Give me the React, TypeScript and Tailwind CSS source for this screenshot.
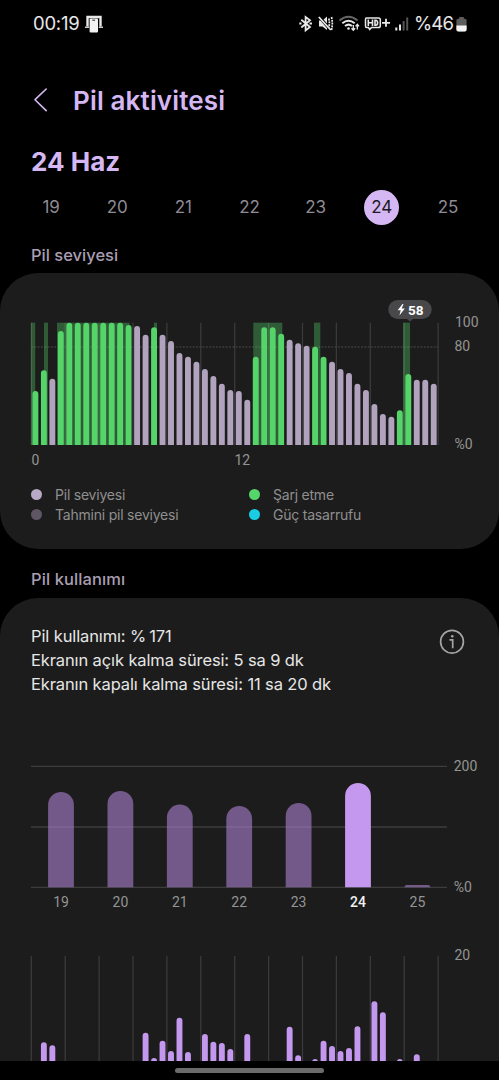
import type { ReactNode } from "react";

type Level = { v: number; charging?: boolean };

const c = (v: number): Level => ({ v, charging: true });
const n = (v: number): Level => ({ v });

const levels: Level[] = [
  c(54), c(74.7), n(66.3), c(114), c(122.3), c(122.3), c(122.3), c(122.3),
  c(122.3), c(122.3), c(122.3), c(120), n(119), n(110.3), c(117.7), n(110.3),
  n(104), n(92), n(88.3), n(83.3), n(76), n(69), n(61.3), n(55),
  n(54), n(45.3), c(88.3), c(117.7), c(117.7), c(111.3), n(105.3), n(101.7),
  n(99.3), c(98.3), c(88.3), n(83.3), n(76), n(72), n(61.3), n(55),
  n(41), n(31), n(28.3), c(34.7), c(71), n(65.3), n(65.3), n(61.3),
];

const chargeSpans: [number, number][] = [
  [31, 4.2], [44, 4], [57, 72.5], [154, 3], [253.3, 29], [314, 6.3], [403, 7],
];

const daily: [string, number][] = [
  ["19", 95.3], ["20", 96.3], ["21", 82.7], ["22", 81.3], ["23", 84.3], ["24", 104.3], ["25", 2.3],
];

const hourly: [number, number][] = [
  [1, 18.7], [2, 15.7], [13, 28.3], [14, 3], [15, 20.3], [16, 10], [17, 43.3], [18, 9],
  [20, 27], [21, 19.3], [22, 18], [23, 12], [25, 27], [30, 34.3], [31, 5.7], [33, 2],
  [34, 20.3], [35, 15], [36, 10], [37, 13], [38, 34.7], [40, 59.7], [41, 48.7], [43, 2], [45, 6.7],
];

const gridX = Array.from({ length: 13 }, (_, i) => 31.3 + i * 33.9);
const slotX = (i: number) => 35.4 + i * 8.475;

function barPath(cx: number, width: number, height: number, base: number) {
  const r = Math.min(width / 2, height);
  const l = cx - width / 2;
  const t = base - height;
  return `M${l} ${base}V${t + r}A${r} ${r} 0 0 1 ${l + r} ${t}H${l + width - r}A${r} ${r} 0 0 1 ${l + width} ${t + r}V${base}Z`;
}

function StatusBar() {
  return (
    <div className="flex h-[46px] shrink-0 items-center justify-between pl-[33px] pr-[32px] pt-px text-[#e8e8e8]">
      <div className="flex items-center">
        <span className="w-[52px] whitespace-nowrap text-[18.5px] tracking-[-0.25px]">00:19</span>
        <svg className="h-[18px] w-[18px]" viewBox="0 0 18 18" fill="none">
          <path d="M2.500 11.500V2h13v9.500" stroke="#e8e8e8" strokeWidth="2.400" />
          <path d="M0 12.300h4.200M13.800 12.300H18" stroke="#cfcfcf" strokeWidth="1.400" />
          <rect x="4.600" y="3.600" width="8.400" height="14" rx="1" fill="#f2f2f2" />
          <path d="M7.300 5.200h2.800" stroke="#222" />
        </svg>
      </div>
      <div className="flex items-center">
        <svg className="h-[20px] w-[112px]" viewBox="298 14 112 20" fill="none" stroke="#e8e8e8" strokeWidth="1.8">
          <path d="m301.300 19.800 8.700 7.200-4.400 3.500V17l4.400 3.300-8.700 7.200" />
          <path d="M299.300 23.600h2.200M309.500 23.600h2.500" strokeWidth="2" />
          <path d="M319 20.500h3.500l4.500-4V30l-4.500-3.500H319Z" fill="#e8e8e8" stroke="none" />
          <path d="m319.500 17 11 13" stroke="#000" strokeWidth="3" />
          <path d="m318.800 17 12 13" strokeWidth="1.800" />
          <path d="M328.800 18.500q1.200 5 0 9M331.500 17q1.600 6.500 0 13" strokeDasharray="2 .8" strokeWidth="1.700" />
          <path d="M339.500 20.500q9-7.500 18 0" stroke="#666" strokeWidth="2" />
          <path d="M342.300 23.300q6.200-5 12.400 0M345 26q3.500-2.800 7 0" strokeWidth="2" />
          <circle cx="348.500" cy="28.500" r="1.300" fill="#e8e8e8" stroke="none" />
          <path d="M353.300 25v5m-1.800-1.800 1.800 2 1.800-2M357.300 29.500v-5m-1.700 1.800 1.700-2 1.700 2" strokeWidth="1.300" />
          <path d="M366.500 18h12q1.800 0 1.800 1.800v5.900q0 1.800-1.800 1.800h-7l-1.800 2-1.200-2h-2q-1 0-1-1.500V19.500q0-1.500 1-1.500Z" strokeWidth="1.500" />
          <path d="M368.300 19.500v6.500m4.200-6.500v6.500m-4.200-3.200h4.200M375 20.300v4.900h.7q1.900 0 1.900-2.400t-1.900-2.500Z" strokeWidth="1.600" />
          <path d="M382 22.800h8m-4-4v8" strokeWidth="1.800" />
          <path d="M396.300 27.500v3M400 24.500v6" strokeWidth="2" />
          <path d="M403.600 21v9.500M407.200 17.500v13" stroke="#555" strokeWidth="2" />
        </svg>
        <span className="ml-[4px] w-[42px] whitespace-nowrap text-[18.5px] tracking-[-0.8px]">%46</span>
        <svg className="mt-px h-[15px] w-[11px]" viewBox="0 0 11 15">
          <path d="M3.200 0h4.600v1.800H9q1.600 0 1.600 1.700V12.500q0 2-2 2H2.400q-2 0-2-2V3.500q0-1.700 1.600-1.700h1.200Z" fill="#5c5c5c" />
          <path d="M.4 8.500h10.200v4q0 2-2 2H2.400q-2 0-2-2Z" fill="#f4f4f4" />
        </svg>
      </div>
    </div>
  );
}

function Days() {
  return (
    <div className="mt-[11px] flex h-[36px] items-center px-[18px] text-[17px] tracking-[-0.1px] text-[#8f8b94]">
      {["19", "20", "21", "22", "23", "24", "25"].map((d) => (
        <div key={d} className="flex flex-1 justify-center">
          <span className={d === "24" ? "flex size-[35px] items-center justify-center rounded-full bg-[#d5b8f3] pt-px text-[#1d1822]" : "flex size-[35px] items-center justify-center pt-px"}>{d}</span>
        </div>
      ))}
    </div>
  );
}

function LevelChart() {
  return (
    <svg className="block h-[200px] w-[499px]" viewBox="0 273 499 200" fontFamily="Roboto, sans-serif">
      {gridX.map((x) => <path key={x} d={`M${x} 322.700V445`} stroke="#3a3a3a" strokeWidth="1.300" />)}
      <path d="M31 347h407" stroke="#4a4a4a" strokeDasharray="2 1.300" />
      {chargeSpans.map(([x, w]) => <rect key={x} x={x} y="322.700" width={w} height="122.300" fill="#55d66b" fillOpacity=".34" />)}
      {levels.map((b, i) => <path key={i} d={barPath(slotX(i), 5.9, b.v, 445)} fill={b.charging ? "#55d46a" : "#b1a3bd"} />)}
      <rect x="388.300" y="300" width="43.400" height="19" rx="9.500" fill="#48484a" />
      <path d="M406.500 318.500h7l-3.500 3Z" fill="#48484a" />
      <path d="m402.500 304-4.800 6.200h3l-1.300 5.300 5.400-7h-3.100l1.800-4.500Z" fill="#fff" />
      <text x="408" y="314.500" fill="#fff" fontSize="13.500" fontWeight="700" fontFamily="Roboto, sans-serif" textLength="15.500">58</text>
      <g fill="#949494" fontSize="14">
        <text x="455" y="327">100</text>
        <text x="454.500" y="351.300">80</text>
        <text x="454.500" y="449">%0</text>
        <text x="31.500" y="465.300">0</text>
        <text x="234.500" y="465.300">12</text>
      </g>
    </svg>
  );
}

function LegendItem({ dot, children }: { dot: string; children: ReactNode }) {
  return (
    <div className="flex h-[20px] items-center gap-[13px]">
      <span className={`size-[11px] rounded-full ${dot}`} />
      <span className="text-[14px] tracking-[-0.22px] text-[#8f8f8f]">{children}</span>
    </div>
  );
}

function DailyChart() {
  return (
    <svg className="block h-[170px] w-[499px]" viewBox="0 750 499 170" fontFamily="Roboto, sans-serif">
      <path d="M31 766.300h416M31 827h416M31 887.300h416" stroke="#3c3c3c" strokeWidth="1.300" />
      {daily.map(([d, h], i) => {
        const active = d === "24";
        const x = 61 + i * 59.4;
        return (
          <g key={d}>
            <path d={barPath(x, 25.8, h, 887.3)} fill={active ? "#c398ee" : "#a880cf"} fillOpacity={active ? 1 : 0.62} />
            <text x={x} y="907" textAnchor="middle" fontSize="14" fontWeight={active ? 500 : 400} fill={active ? "#f2f2f2" : "#949494"}>{d}</text>
          </g>
        );
      })}
      <g fill="#949494" fontSize="14">
        <text x="453.700" y="770.500">200</text>
        <text x="453.700" y="891.500">%0</text>
      </g>
    </svg>
  );
}

function HourlyChart() {
  return (
    <svg className="block h-[141px] w-[499px]" viewBox="0 920 499 141" fontFamily="Roboto, sans-serif">
      {gridX.map((x) => <path key={x} d={`M${x} 956V1061`} stroke="#3a3a3a" strokeWidth="1.300" />)}
      {hourly.map(([i, h]) => <path key={i} d={barPath(slotX(i), 5.9, h + 4, 1065)} fill="#c398ee" />)}
      <text x="454.500" y="960.300" fill="#949494" fontSize="14">20</text>
    </svg>
  );
}

export default function App() {
  return (
    <div className="flex h-[1080px] w-[499px] flex-col overflow-hidden bg-black font-['Inter',sans-serif]">
      <StatusBar />
      <header className="flex h-[64px] shrink-0 items-center pl-[33px] pt-[44px] text-[#d5b8f3]">
        <svg className="h-[26px] w-[15px] shrink-0" viewBox="0 0 15 26" fill="none" stroke="currentColor" strokeWidth="1.600" strokeLinecap="round" strokeLinejoin="round">
          <path d="M13.200 2 2 12.700l11.200 10.900" />
        </svg>
        <h1 className="ml-[25px] mt-[2px] whitespace-nowrap text-[26px] font-semibold leading-[32px] tracking-[0.15px]">Pil aktivitesi</h1>
      </header>
      <h2 className="mt-[36px] shrink-0 pl-[31px] text-[26px] font-bold leading-[32px] tracking-[0px] text-[#d5b8f3]">24 Haz</h2>
      <Days />
      <h3 className="mt-[19px] h-[29px] shrink-0 pl-[31px] text-[16.5px] font-medium leading-[22px] tracking-[0px] text-[#a99fb3]">Pil seviyesi</h3>
      <section className="h-[276px] shrink-0 rounded-[38px] bg-[#1c1c1c]">
        <LevelChart />
        <div className="grid grid-cols-[218px_1fr] pl-[31px] pt-[11px]">
          <LegendItem dot="bg-[#b8a9c6]">Pil seviyesi</LegendItem>
          <LegendItem dot="bg-[#55d66b]">Şarj etme</LegendItem>
          <LegendItem dot="bg-[#5f5664]">Tahmini pil seviyesi</LegendItem>
          <LegendItem dot="bg-[#1bcde4]">Güç tasarrufu</LegendItem>
        </div>
      </section>
      <h3 className="h-[49px] shrink-0 pl-[31px] pt-[19px] text-[16.5px] font-medium leading-[22px] tracking-[0.1px] text-[#a99fb3]">Pil kullanımı</h3>
      <section className="h-[463px] shrink-0 overflow-hidden rounded-t-[38px] bg-[#1c1c1c]">
        <div className="flex h-[152px] justify-between pl-[31px] pr-[34px] pt-[26px]">
          <div className="whitespace-nowrap text-[16.500px] leading-[24px] tracking-[-0.12px] text-[#e6e6e6]">
            <p>Pil kullanımı: %<span className="ml-[3px]">171</span></p>
            <p>Ekranın açık kalma süresi: 5 sa 9 dk</p>
            <p>Ekranın kapalı kalma süresi: 11 sa 20 dk</p>
          </div>
          <svg className="mt-[5px] size-[26px]" viewBox="0 0 26 26" fill="none" stroke="#a5a5a5" strokeWidth="1.700">
            <circle cx="13" cy="12.700" r="11.400" />
            <path d="M10.500 10.800h3.200v8.400" />
            <circle cx="13.300" cy="7.300" r="1.300" fill="#a5a5a5" stroke="none" />
          </svg>
        </div>
        <DailyChart />
        <HourlyChart />
      </section>
      <footer className="flex h-[19px] shrink-0 justify-center bg-black pt-[7px]">
        <div className="h-[5px] w-[149px] rounded-full bg-[#6b6b6b]" />
      </footer>
    </div>
  );
}
